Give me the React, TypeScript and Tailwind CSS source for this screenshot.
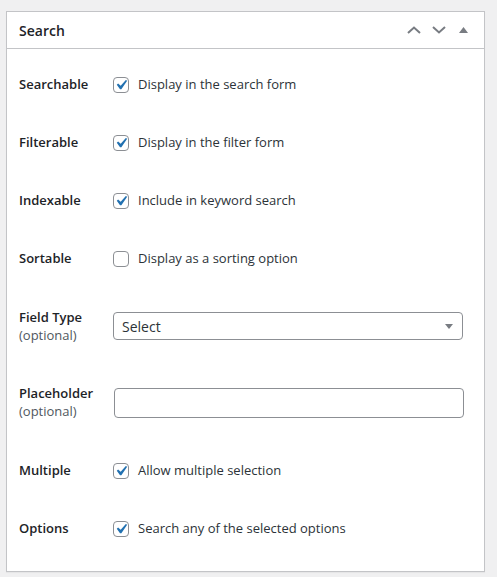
import React from 'react';

const font = { fontFamily: '"Open Sans", "Noto Sans", sans-serif' };

function Checkbox({ checked }: { checked: boolean }) {
	return (
		<span className="w-4 h-4 shrink-0 rounded-[4px] border border-[#8c8f94] bg-white flex items-center justify-center overflow-visible">
			{checked && (
				<svg width="20" height="20" viewBox="0 0 20 20" className="shrink-0 -m-[3px]">
					<path d="M14.83 4.89l1.34.94-5.81 8.38H9.02L5.78 9.67l1.34-1.25 2.57 2.4z" fill="#2271b1" />
				</svg>
			)}
		</span>
	);
}

function CheckRow({ label, text, checked }: { label: string; text: string; checked: boolean }) {
	return (
		<div className="flex items-center h-[58px]">
			<div className="w-[94px] text-[13px] font-semibold text-[#1d2327]">{label}</div>
			<label className="flex items-center gap-[9px] text-[13px] text-[#2c3338]">
				<Checkbox checked={checked} />
				{text}
			</label>
		</div>
	);
}

export default function App() {
	return (
		<div className="min-h-screen bg-[#f0f0f1] pt-[11px] pl-[6px] pr-[12px]" style={font}>
			<div className="w-[479px] bg-white border border-[#c3c4c7] shadow-[0_1px_1px_rgba(0,0,0,0.04)]">
				<div className="h-[37px] flex items-center justify-between pl-3 pr-[8px] border-b border-[#c3c4c7]">
					<h2 className="text-[14px] font-semibold text-[#1d2327]">Search</h2>
					<div className="flex items-center">
						<button className="w-[25px] h-[36px] flex items-center justify-center">
							<svg width="14" height="8" viewBox="0 0 14 8">
								<path d="M1 7l6-5.5L13 7" stroke="#787c82" strokeWidth="2" fill="none" />
							</svg>
						</button>
						<button className="w-[25px] h-[36px] flex items-center justify-center">
							<svg width="14" height="8" viewBox="0 0 14 8">
								<path d="M1 1l6 5.5L13 1" stroke="#787c82" strokeWidth="2" fill="none" />
							</svg>
						</button>
						<button className="w-[25px] h-[36px] flex items-center justify-center">
							<svg width="9" height="6" viewBox="0 0 9 6">
								<path d="M0 6L4.5 0 9 6z" fill="#787c82" />
							</svg>
						</button>
					</div>
				</div>
				<div className="px-3 pt-[7px] pb-[13px]">
					<CheckRow label="Searchable" text="Display in the search form" checked />
					<CheckRow label="Filterable" text="Display in the filter form" checked />
					<CheckRow label="Indexable" text="Include in keyword search" checked />
					<CheckRow label="Sortable" text="Display as a sorting option" checked={false} />

					<div className="flex items-start h-[77px] pt-[20px]">
						<div className="w-[94px] text-[13px] leading-[18px]">
							<div className="font-semibold text-[#1d2327]">Field Type</div>
							<div className="text-[#50575e]">(optional)</div>
						</div>
						<div className="mt-[4px] w-[350px] h-[28px] border border-[#8c8f94] rounded-[4px] flex items-center justify-between pl-[8px] pr-[9px] text-[14px] text-[#2c3338]">
							<span>Select</span>
							<svg width="8" height="5" viewBox="0 0 8 5">
								<path d="M0 0h8L4 5z" fill="#787c82" />
							</svg>
						</div>
					</div>

					<div className="flex items-start h-[77px] pt-[19px]">
						<div className="w-[95px] text-[13px] leading-[18px]">
							<div className="font-semibold text-[#1d2327]">Placeholder</div>
							<div className="text-[#50575e]">(optional)</div>
						</div>
						<div className="mt-[4px] w-[350px] h-[30px] border border-[#8c8f94] rounded-[4px] bg-white" />
					</div>

					<CheckRow label="Multiple" text="Allow multiple selection" checked />
					<CheckRow label="Options" text="Search any of the selected options" checked />
				</div>
			</div>
		</div>
	);
}
